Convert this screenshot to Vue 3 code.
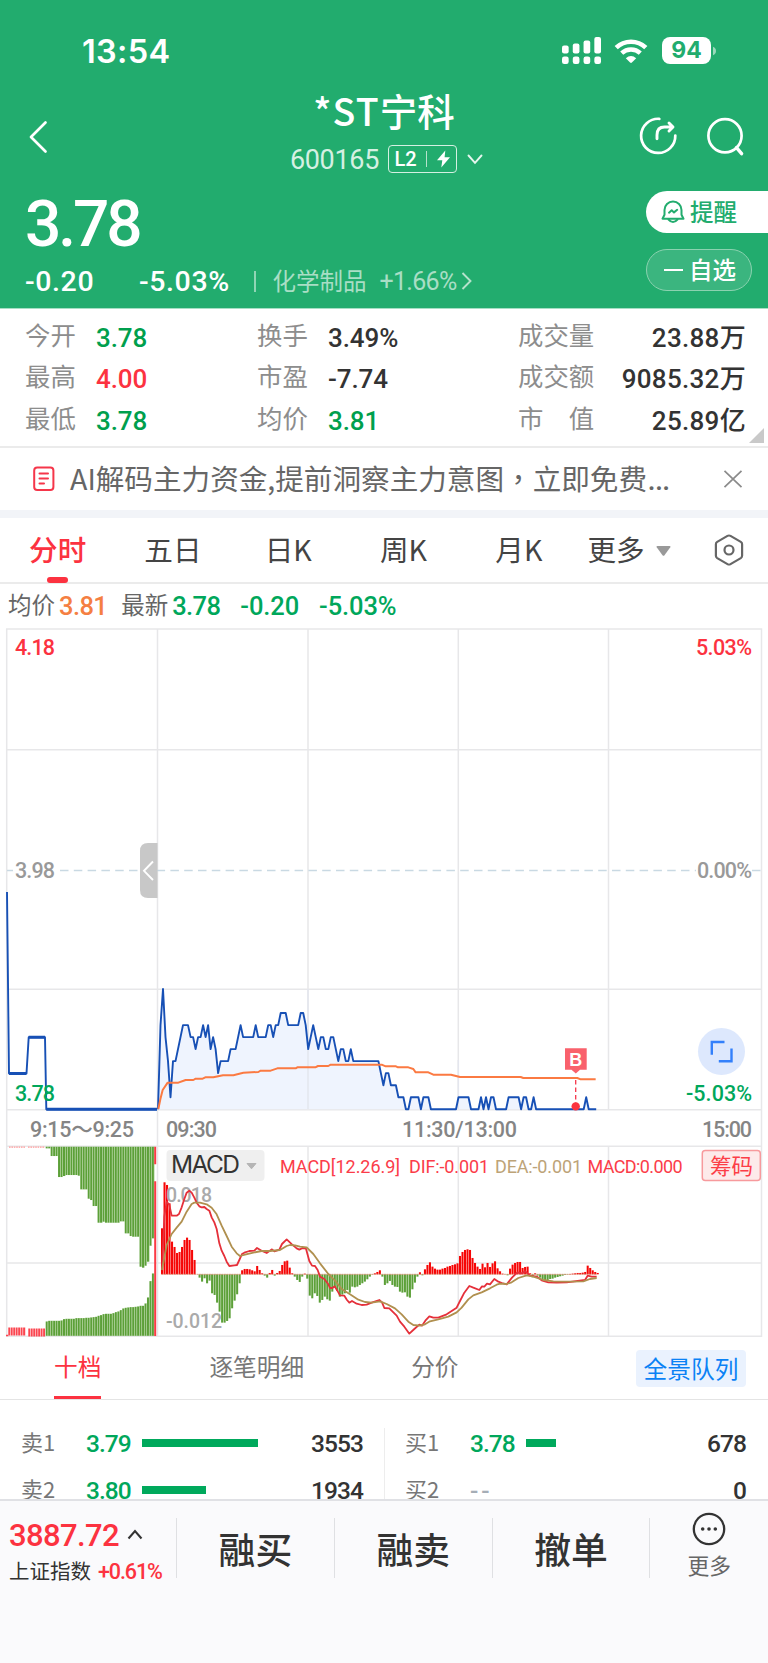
<template>
	<div class="page">
		<!-- 顶部 -->
		<header class="header">
			<div class="status-bar">
				<span class="clock">13:54</span>
				<div class="status-icons">
					<svg class="signal" width="39" height="27" viewBox="0 0 38 27" preserveAspectRatio="none" fill="#fff">
						<rect x="0" y="8.5" width="6.5" height="8" rx="2" />
						<rect x="10.5" y="6.5" width="6.5" height="10" rx="2" />
						<rect x="21" y="3.5" width="6.5" height="13" rx="2" />
						<rect x="31.5" y="0" width="6.5" height="16.5" rx="2" />
						<rect v-for="i in 4" :key="i" :x="(i - 1) * 10.5" y="19.5" width="6.5" height="7.5" rx="2.2" />
					</svg>
					<svg class="wifi" width="34" height="26" viewBox="0 0 34 26">
						<path d="M2.2 9.6A21.5 21.5 0 0 1 31.8 9.6" fill="none" stroke="#fff" stroke-width="4.6" />
						<path d="M7.7 15.2A13.6 13.6 0 0 1 26.3 15.2" fill="none" stroke="#fff" stroke-width="4.4" />
						<path d="M11.8 20.2Q17 16 22.2 20.2L17.9 24.5Q17 25.3 16.1 24.5Z" fill="#fff" />
					</svg>
					<div class="battery">94</div>
					<svg width="6" height="10" viewBox="0 0 6 10"><path d="M2 0.8Q5 2 5 5T2 9.2Z" fill="#9ad9bb" /></svg>
				</div>
			</div>

			<div class="nav">
				<svg class="back" width="20" height="34" viewBox="0 0 20 34">
					<path d="M17.5 2.5L3 17L17.5 31.5" fill="none" stroke="#fff" stroke-width="2.7" stroke-linecap="round" stroke-linejoin="round" />
				</svg>
				<div class="title">
					<h1><span>*ST</span>宁科</h1>
					<div class="code-row">
						<span class="code">600165</span>
						<span class="level">
							<span>L2</span>
							<i></i>
							<svg width="15" height="18" viewBox="0 0 15 18"><path d="M9.3 0.5L1 10.3H6.3L5.3 17.5L14 7.3H8.6Z" fill="#fff" /></svg>
						</span>
						<svg class="down" width="16" height="11" viewBox="0 0 16 11">
							<path d="M1.5 1.5L8 8.8L14.5 1.5" fill="none" stroke="#e6f6ee" stroke-width="1.9" stroke-linecap="round" />
						</svg>
					</div>
				</div>
				<div class="nav-icons">
					<svg width="40" height="42" viewBox="0 0 40 42" fill="none" stroke="#fff" stroke-width="2.7" stroke-linecap="round" stroke-linejoin="round">
						<path d="M21.3 3.8A17.1 17.1 0 1 0 37.3 20.5" />
						<path d="M19 23.8V20Q19 12 26.5 12H34M31 8L35 12L31 16" stroke-width="2.9" />
					</svg>
					<svg width="40" height="42" viewBox="0 0 40 42" fill="none" stroke="#fff" stroke-width="2.7" stroke-linecap="round">
						<circle cx="19" cy="20.8" r="16.6" />
						<path d="M30.5 32.6L35.6 38.6" stroke-width="3.4" />
					</svg>
				</div>
			</div>

			<div class="quote">
				<div class="quote-main">
					<div class="price num">3.78</div>
					<div class="change-row">
						<span class="change num">-0.20</span>
						<span class="percent num">-5.03%</span>
						<i></i>
						<span class="sector">化学制品</span>
						<span class="sector-rate num">+1.66%</span>
						<svg width="12" height="18" viewBox="0 0 12 18"><path d="M1.5 1L9.5 9L1.5 17" fill="none" stroke="#b5e2cc" stroke-width="1.9" /></svg>
					</div>
				</div>
				<div class="pills">
					<button class="pill pill-alert">
						<svg width="24" height="24" viewBox="0 0 24 24" fill="none" stroke="#22ac6e" stroke-width="2" stroke-linejoin="round" stroke-linecap="round">
							<path d="M1.5 18.7H22.5L20.5 14.8V10A8.5 8.5 0 0 0 3.5 10V14.8Z" />
							<path d="M7.5 19.5Q12 24.5 16.5 19.5" />
							<path d="M8 12.7L10.7 10.3L13 12.4L16.2 9.8" />
						</svg>
						<span>提醒</span>
					</button>
					<button class="pill pill-self">
						<i></i>
						<span>自选</span>
					</button>
				</div>
			</div>
		</header>

		<!-- 行情数据 -->
		<section class="stats">
			<div v-for="row in stats" :key="row[0].label" class="stat-row">
				<template v-for="item in row" :key="item.label">
					<span class="stat-label">{{ item.label }}</span>
					<span class="stat-value num" :class="item.tone">{{ item.value }}</span>
				</template>
			</div>
			<svg class="corner" width="15" height="15" viewBox="0 0 15 15"><path d="M15 0V15H0Z" fill="#c9c9c9" /></svg>
		</section>

		<!-- 公告 -->
		<section class="notice">
			<svg width="22" height="26" viewBox="0 0 22 26" fill="none" stroke="#f5364a" stroke-width="2" stroke-linecap="round">
				<rect x="1.2" y="1.4" width="19.2" height="22.6" rx="3" />
				<path d="M6.5 7.6H15M6.5 12.6H15M6.5 17.5H11" />
			</svg>
			<p>AI解码主力资金,提前洞察主力意图<span lang="zh-TW">，</span>立即免费<b>…</b></p>
			<svg width="20" height="20" viewBox="0 0 20 20"><path d="M1.5 1.8L18.5 18.2M18.5 1.8L1.5 18.2" stroke="#8b8b8b" stroke-width="1.7" /></svg>
		</section>

		<!-- 周期切换 -->
		<nav class="periods">
			<a v-for="p in periods" :key="p" :class="{ active: p === period }" @click="period = p">{{ p }}</a>
			<span class="more">更多</span>
			<svg class="tri" width="15" height="10" viewBox="0 0 15 10"><path d="M1.5 0H13.5Q15 0 14.3 1.3L8.5 9.2Q7.5 10.4 6.5 9.2L0.7 1.3Q0 0 1.5 0Z" fill="#999" /></svg>
			<svg class="setting" width="30" height="32" viewBox="0 0 30 32" fill="none" stroke="#666" stroke-width="2.2" stroke-linejoin="round">
				<path d="M13.5 1.9Q15 1.1 16.5 1.9L26.8 7.9Q28.1 8.7 28.1 10.2V21.8Q28.1 23.3 26.8 24.1L16.5 30.1Q15 30.9 13.5 30.1L3.2 24.1Q1.9 23.3 1.9 21.8V10.2Q1.9 8.7 3.2 7.9Z" />
				<circle cx="15" cy="16" r="4.5" />
			</svg>
		</nav>

		<div class="summary">
			<span class="avg-label">均价</span>
			<span class="num orange">3.81</span>
			<span class="new-label">最新</span>
			<span class="num">3.78</span>
			<span class="num diff">-0.20</span>
			<span class="num rate">-5.03%</span>
		</div>

		<!-- 分时图 + MACD -->
		<svg class="chart" width="768" height="714" viewBox="0 623 768 714">
			<g fill="none" stroke="#e7e7e9" stroke-width="1.5">
				<path d="M6.7 629H761.5V1336.3H6.7Z" />
				<path d="M7 749.8H761M7 989.2H761M7 1109.7H761M7 1146.3H761M7 1263H761" />
				<path d="M157.5 629V1336M308 629V1109M458.3 629V1109M608.5 629V1109M308 1146V1336M458.3 1146V1336M608.5 1146V1336" />
			</g>
			<path d="M7 870.5H13M60 870.5H696M752 870.5H761" stroke="#c9d9e3" stroke-width="1.5" stroke-dasharray="8.5 5.3" />

			<polygon :points="areaPoints" fill="#eff4fe" />
			<path d="M308 989V1109M458.3 1060V1109" stroke="#e4e6ee" stroke-width="1.5" />
			<polyline points="7,892 9,1073.4 26.5,1073.4 28.7,1037.2 45,1037.2 46.3,1109.2 157,1109.2" class="price-line" />
			<path d="M9 1073.4H26.5M28.7 1037.2H45M46.3 1109.2H157" class="price-bold" />
			<polyline :points="pricePoints" class="price-line" />
			<g transform="translate(0 840) scale(0.33333)">
				<polyline :points="avgLine" class="avg-line" />
			</g>

			<path d="M575.7 1080V1104" stroke="#f5364a" stroke-width="1.3" stroke-dasharray="4.5 3" />
			<circle cx="575.7" cy="1106.4" r="4.2" fill="#fb3440" />
			<path d="M565 1048.3H586.7V1069.8H580L575.8 1073.5L571.5 1069.8H565Z" fill="#f9616c" />
			<text x="575.8" y="1065.5" class="mark">B</text>

			<path d="M157.5 843H148Q140 843 140 851V890Q140 898 148 898H157.5Z" fill="#c8c8c8" />
			<path d="M153 861.5L144 870.8L153 880" fill="none" stroke="#fff" stroke-width="1.9" />

			<circle cx="721.5" cy="1051.5" r="23.5" fill="#dde8fd" />
			<path d="M724.5 1042H711.8V1054.8M718.8 1061.2H731.5V1048.5" fill="none" stroke="#3380fb" stroke-width="2.4" />

			<g class="axis">
				<text x="15" y="654.5" textLength="40" class="up">4.18</text>
				<text x="696" y="654.5" textLength="56" class="up">5.03%</text>
				<text x="15" y="878" textLength="40" class="mid">3.98</text>
				<text x="697" y="878" textLength="55" class="mid">0.00%</text>
				<text x="15" y="1101" textLength="40" class="down">3.78</text>
				<text x="686" y="1101" textLength="66" class="down">-5.03%</text>
				<text x="30" y="1137" textLength="104">9:15～9:25</text>
				<text x="166" y="1137" textLength="51">09:30</text>
				<text x="402" y="1137" textLength="115">11:30/13:00</text>
				<text x="702" y="1137" textLength="50">15:00</text>
			</g>

			<!-- 集合竞价柱 -->
			<path d="M9 1147.2H25.5M28 1147.2H45" stroke="#f99" stroke-width="1.3" stroke-dasharray="1.6 .8" />
			<g fill="#5ca038">
				<rect v-for="(h, i) in auctionTop" :key="'t' + i" :x="45.7 + i * 2.47" y="1146.7" width="2" :height="h / 3" />
				<rect v-for="(h, i) in auctionBottom" :key="'b' + i" :x="45.7 + i * 2.47" :y="1335.8 - h / 3" width="2" :height="h / 3" />
			</g>
			<g fill="#96c47c">
				<rect v-for="(h, i) in auctionTop" :key="'tg' + i" :x="47.7 + i * 2.47" y="1146.7" width="0.47" :height="h / 3" />
				<rect v-for="(h, i) in auctionBottom" :key="'bg' + i" :x="47.7 + i * 2.47" :y="1335.8 - h / 3" width="0.47" :height="h / 3" />
			</g>
			<path d="M155.2 1146.7V1164.3M155.2 1181.3V1336" stroke="#fb3a45" stroke-width="2" />
			<path d="M8.3 1331.5H25.8M28.3 1332.5H45.3" stroke="#fb4650" stroke-width="8" stroke-dasharray="1.9 .57" />
			<path d="M6 1335.5H8.3" stroke="#fb4650" stroke-width="1.5" />

			<!-- MACD -->
			<rect v-for="(h, i) in histogram" :key="'m' + i" :x="161 + i * 2.504" :y="h > 0 ? 1274.3 - h / 3 : 1274.3" width="2.05" :height="Math.abs(h) / 3" :fill="h > 0 ? '#f60606' : '#5ca038'" />
			<path d="M161.5 1274.3H597" stroke="#d98c70" stroke-width="0.8" stroke-dasharray="2 .5" />
			<g class="axis small">
				<text x="166" y="1202" textLength="46">0.018</text>
				<text x="166" y="1328" textLength="56">-0.012</text>
			</g>
			<g transform="translate(0 1130) scale(0.33333)">
				<polyline :points="difLine" class="dif-line" />
				<polyline :points="deaLine" class="dea-line" />
			</g>

			<rect x="166.5" y="1150" width="98" height="31" rx="4" fill="#efefef" />
			<text x="171" y="1173" textLength="69" class="macd-name">MACD</text>
			<path d="M247 1163.5H256L251.5 1168.8Z" fill="#b5b5b5" stroke="#b5b5b5" stroke-linejoin="round" />
			<g class="indicator">
				<text x="280" y="1172.5" textLength="120">MACD[12.26.9]</text>
				<text x="409" y="1172.5" textLength="80">DIF:-0.001</text>
				<text x="495" y="1172.5" textLength="87" class="dea">DEA:-0.001</text>
				<text x="587.5" y="1172.5" textLength="95">MACD:0.000</text>
			</g>
			<rect x="702.3" y="1150.5" width="58" height="30" rx="3" fill="#fdeaea" stroke="#f79a9d" stroke-width="1.5" />
			<text x="710" y="1174" class="chips">筹码</text>
		</svg>

		<!-- 盘口 -->
		<nav class="depth-tabs">
			<a class="active">十档</a>
			<a>逐笔明细</a>
			<a>分价</a>
			<button>全景队列</button>
		</nav>
		<section class="depth">
			<div v-for="(side, s) in depth" :key="s" class="depth-side">
				<div v-for="o in side" :key="o.name" class="depth-row">
					<span class="depth-name">{{ o.name }}</span>
					<span class="depth-price num" :class="{ none: !o.bar }">{{ o.price }}</span>
					<i :style="{ width: o.bar + 'px' }"></i>
					<span class="depth-vol num">{{ o.vol }}</span>
				</div>
			</div>
		</section>

		<!-- 底部操作栏 -->
		<footer class="footer">
			<div class="index">
				<div class="index-value">
					<span class="num">3887.72</span>
					<svg width="16" height="11" viewBox="0 0 16 11"><path d="M1.5 9.5L8 2L14.5 9.5" fill="none" stroke="#333" stroke-width="2.1" /></svg>
				</div>
				<div class="index-name">上证指数<span class="num">+0.61%</span></div>
			</div>
			<button v-for="a in actions" :key="a" class="action">{{ a }}</button>
			<div class="footer-more">
				<svg width="34" height="34" viewBox="0 0 34 34">
					<circle cx="17" cy="17" r="15.2" fill="none" stroke="#333" stroke-width="2.3" />
					<circle v-for="i in 3" :key="i" :cx="4.4 + i * 6.3" cy="17" r="1.8" fill="#333" />
				</svg>
				<span>更多</span>
			</div>
		</footer>
	</div>
</template>

<script setup>
	import {
		ref,
		computed
	} from 'vue'

	const period = ref('分时')
	const periods = ['分时', '五日', '日K', '周K', '月K']
	const actions = ['融买', '融卖', '撤单']

	const stats = [
		[
			{ label: '今开', value: '3.78', tone: 'green' },
			{ label: '换手', value: '3.49%' },
			{ label: '成交量', value: '23.88万' }
		],
		[
			{ label: '最高', value: '4.00', tone: 'red' },
			{ label: '市盈', value: '-7.74' },
			{ label: '成交额', value: '9085.32万' }
		],
		[
			{ label: '最低', value: '3.78', tone: 'green' },
			{ label: '均价', value: '3.81', tone: 'green' },
			{ label: '市　值', value: '25.89亿' }
		]
	]

	const depth = [
		[
			{ name: '卖1', price: '3.79', bar: 116, vol: 3553 },
			{ name: '卖2', price: '3.80', bar: 64, vol: 1934 }
		],
		[
			{ name: '买1', price: '3.78', bar: 30, vol: 678 },
			{ name: '买2', price: '--', bar: 0, vol: 0 }
		]
	]

	// [分钟, 高出跌停价的分数]
	const ticks = [
		[0, 0], [1, 7], [2, 10], [3, 6], [4, 4], [5, 1], [6, 4], [7, 4], [10, 7], [12, 7], [13, 6], [14, 6], [15, 5],
		[16, 6], [17, 6], [18, 7], [19, 6], [20, 7], [21, 5], [22, 6], [23, 5], [24, 3], [25, 4], [28, 4], [29, 5],
		[31, 5], [33, 7], [34, 6], [38, 6], [39, 7], [40, 6], [43, 6], [44, 7], [45, 7], [46, 6], [47, 7], [48, 7],
		[49, 8], [51, 8], [52, 7], [56, 7], [57, 8], [58, 8], [59, 7], [60, 5], [62, 7], [64, 5], [65, 6], [66, 6],
		[67, 5], [68, 5], [69, 6], [70, 6], [72, 4], [73, 5], [74, 5], [75, 4], [76, 4], [77, 5], [78, 4], [88, 4],
		[90, 2], [91, 3], [92, 3], [93, 2], [95, 2], [96, 1], [98, 1], [99, 0], [100, 0], [101, 1], [104, 1], [105, 0],
		[106, 1], [108, 1], [109, 0], [119, 0], [120, 1], [124, 1], [125, 0], [128, 0], [129, 1], [130, 0], [131, 1],
		[132, 0], [133, 1], [134, 1], [135, 0], [139, 0], [140, 1], [144, 1], [145, 0], [146, 1], [147, 1], [148, 0],
		[149, 0], [150, 1], [151, 0], [170, 0], [171, 1], [172, 0], [175, 0]
	]

	const toPoint = ([m, l]) => `${(158 + m * 2.504).toFixed(1)},${(1109.2 - l * 12.02).toFixed(1)}`
	const pricePoints = computed(() => ticks.map(toPoint).join(' '))
	const areaPoints = computed(() => `${pricePoints.value} 596,1109.2 158,1109.2`)

	const avgLine = '475,807 481,778 488,750 503,728 535,728 557,720 580,720 587,716 608,716 616,712 640,712 669,706 700,706 730,698 775,696 782,692 812,692 832,685 887,685 892,682 946,682 954,678 985,678 992,674 1145,674 1157,679 1188,679 1194,682 1225,682 1240,687 1247,697 1285,697 1300,704 1353,704 1380,711 1562,711 1570,714 1732,714 1742,718 1787,718'

	const auctionTop = [5, 5, 28, 28, 28, 91, 91, 88, 85, 85, 85, 85, 85, 87, 128, 128, 128, 156, 160, 178, 178, 228, 228, 225, 228, 228, 228, 228, 228, 228, 224, 224, 260, 260, 268, 270, 270, 270, 360, 363, 357, 345, 297, 275]
	const auctionBottom = [43, 45, 45, 45, 45, 45, 46, 50, 51, 51, 51, 51, 53, 53, 53, 53, 54, 54, 55, 56, 57, 60, 62, 65, 66, 66, 66, 68, 71, 73, 77, 82, 84, 85, 86, 86, 87, 88, 90, 90, 97, 115, 164, 187]

	const histogram = [
		138, 276, 268, 213, 98, 82, 64, 67, 82, 103, 110, 103, 73, 43, 0, -10, -22, -12, -27, -19, -57, -62, -85, -112,
		-145, -145, -140, -132, -102, -79, -60, -27, 12, 16, 16, 15, 12, 9, 25, 13, 3, -4, -10, 4, 13, -4, 4, 10, 28,
		39, 41, 20, 3, -7, -17, -23, -7, 2, -13, -64, -72, -57, -65, -85, -77, -67, -75, -79, -52, -40, -50, -67, -61,
		-57, -47, -55, -37, -39, -37, -32, -27, -22, -15, -7, -1, 3, 7, 12, -7, -32, -27, -20, -32, -37, -38, -52, -55,
		-54, -67, -70, -45, -25, -7, 6, -3, 15, 28, 36, 23, 17, 14, 14, 17, 19, 23, 25, 28, 30, 33, 55, 67, 73, 75, 73,
		49, 34, 23, 16, 32, 21, 34, 22, 33, 39, 18, 9, 2, 0, -3, 17, 29, 34, 37, 37, 19, 22, 23, 3, -9, 3, -4, -10,
		-14, -17, -17, -14, -13, -10, -8, -6, -4, -2, -1, 1, 2, 3, 4, 4, 5, 7, 26, 19, 12, 7, 4
	]

	const difLine = '486,420 493,260 500,215 508,225 515,257 530,257 537,252 545,232 553,207 560,188 568,182 575,188 583,203 590,218 598,229 605,232 613,231 620,237 628,242 635,262 643,277 650,297 658,340 665,362 673,378 680,395 688,408 703,406 711,405 718,390 726,372 733,368 748,363 763,362 771,354 786,363 800,369 816,358 823,364 838,359 846,342 860,328 876,343 890,355 898,359 908,354 918,356 928,393 936,407 945,408 953,420 960,440 973,447 985,463 990,474 997,474 1004,469 1012,482 1020,496 1033,497 1041,510 1048,518 1056,513 1070,521 1085,525 1100,524 1115,518 1138,510 1146,517 1153,534 1168,535 1190,557 1200,575 1213,590 1228,611 1243,597 1258,584 1266,587 1276,572 1288,559 1300,563 1315,563 1340,553 1370,533 1380,513 1393,488 1408,468 1420,473 1438,480 1446,469 1453,470 1461,461 1470,463 1483,447 1495,455 1506,459 1520,463 1536,443 1552,427 1564,430 1576,424 1590,437 1611,440 1625,451 1645,457 1670,458 1700,457 1755,450 1763,437 1775,440 1790,440'
	const deaLine = '486,420 500,345 515,312 530,293 545,275 560,245 575,222 583,218 600,218 620,223 635,233 650,253 665,287 680,318 695,350 710,370 720,378 735,374 760,368 785,363 810,363 840,360 860,348 870,345 885,346 900,350 920,352 940,372 960,400 985,432 1005,452 1025,477 1050,493 1075,509 1095,516 1115,518 1140,514 1160,522 1185,535 1205,553 1225,575 1240,585 1260,587 1275,583 1290,574 1315,568 1345,560 1370,547 1385,533 1405,508 1420,496 1445,487 1470,475 1490,464 1500,461 1520,462 1535,457 1555,444 1580,436 1600,440 1630,450 1660,454 1700,455 1750,454 1770,447 1790,444'
</script>

<style>
	body {
		margin: 0;
		background: #fafafc;
	}
</style>

<style scoped>
	.page {
		width: 768px;
		height: 1663px;
		overflow: hidden;
		background: #fff;
		display: flex;
		flex-direction: column;
		font-family: "Noto Sans CJK SC", sans-serif;
		color: #333;
	}

	.page > * {
		flex: none;
		box-sizing: border-box;
	}

	svg {
		display: block;
		flex: none;
	}

	h1,
	p {
		margin: 0;
		font-weight: 400;
	}

	button {
		font: inherit;
		color: inherit;
		background: none;
		border: none;
		padding: 0;
	}

	.num {
		font-family: Roboto, "Noto Sans CJK SC", sans-serif;
		font-weight: 500;
	}

	.green {
		color: #009f4d;
	}

	.red {
		color: #fc3240;
	}

	/* 顶部 */
	.header {
		height: 309px;
		background: #22ac6e;
		border-bottom: 1px solid #a6dfc4;
		color: #fff;
	}

	.status-bar {
		height: 64px;
		padding: 37px 51px 0 82px;
		box-sizing: border-box;
		display: flex;
		justify-content: space-between;
	}

	.clock {
		font: 600 32.5px/30px Inter, sans-serif;
		letter-spacing: 0.3px;
	}

	.status-icons {
		display: flex;
		align-items: center;
	}

	.wifi {
		margin-left: 13px;
	}

	.battery {
		width: 49px;
		height: 27px;
		margin-left: 14px;
		border-radius: 8px;
		background: #fff;
		color: #22ac6e;
		font: 700 23px/27px Inter, sans-serif;
		text-align: center;
	}

	.nav {
		height: 124px;
		padding: 0 23px 0 28px;
		display: flex;
		align-items: flex-start;
	}

	.back {
		margin-top: 56px;
	}

	.title {
		flex: 1;
		padding: 20px 0 0 0;
		display: flex;
		flex-direction: column;
		align-items: center;
	}

	.title h1 {
		font-size: 37.5px;
		line-height: 52px;
		font-weight: 500;
		margin-left: 82px;
	}

	.title h1 span {
		letter-spacing: 1.2px;
	}

	.code-row {
		display: flex;
		align-items: center;
		margin: 8px 0 0 87px;
	}

	.code {
		font: 400 27px/28px Roboto, sans-serif;
		letter-spacing: -0.3px;
		color: #d5f0e2;
		padding-top: 2px;
	}

	.level {
		width: 67px;
		height: 26px;
		margin-left: 9px;
		border: 1.5px solid #d5f0e2;
		border-radius: 4px;
		display: flex;
		align-items: center;
		justify-content: center;
		font: 500 20px/26px Roboto, sans-serif;
	}

	.level i {
		width: 1px;
		height: 16px;
		margin: 0 9px;
		background: #b5e2cc;
	}

	.down {
		margin-left: 10px;
	}

	.nav-icons {
		display: flex;
		gap: 28px;
		margin-top: 51px;
	}

	.nav-icons svg:last-child {
		margin-right: -1px;
	}

	.quote {
		display: flex;
		justify-content: space-between;
		padding-left: 25px;
	}

	.price {
		font-size: 64px;
		line-height: 64px;
		font-weight: 500;
		letter-spacing: -3.1px;
		margin-top: 5px;
	}

	.change-row {
		display: flex;
		align-items: center;
		margin-top: 9px;
		height: 30px;
	}

	.change,
	.percent {
		font-size: 28.5px;
		letter-spacing: 0.6px;
		padding-top: 1px;
	}

	.change {
		width: 114px;
	}

	.percent {
		width: 115px;
	}

	.change-row i {
		width: 1.5px;
		height: 21px;
		background: #90d5b5;
	}

	.sector {
		margin: -3px 0 0 17px;
		width: 107px;
		font-size: 23.5px;
		color: #a9dec5;
	}

	.sector-rate {
		width: 81px;
		font-size: 25px;
		font-weight: 400;
		letter-spacing: -0.7px;
		color: #a9dec5;
	}

	.pills {
		width: 122px;
		padding-top: 3px;
	}

	.pill {
		display: flex;
		align-items: center;
		box-sizing: border-box;
		height: 42px;
		font-size: 23.5px;
		line-height: 38px;
		font-weight: 500;
	}

	.pill span {
		margin-top: -2px;
	}

	.pill-alert {
		width: 122px;
		padding-left: 15px;
		gap: 5px;
		border-radius: 21px 0 0 21px;
		background: #fff;
		color: #22ac6e;
	}

	.pill-self {
		width: 106px;
		margin-top: 16px;
		padding-left: 17px;
		gap: 6px;
		border: 1.5px solid #8bd2b0;
		border-radius: 21px;
		background: #3bb57f;
	}

	.pill-self i {
		width: 19px;
		height: 2px;
		background: #fff;
	}

	/* 行情数据 */
	.stats {
		position: relative;
		height: 139px;
		padding: 7px 22px 0 25px;
		border-bottom: 2px solid #ebebeb;
	}

	.stat-row {
		display: grid;
		grid-template-columns: 71px 161px 71px 190px 90px 1fr;
		height: 41.4px;
		line-height: 41.4px;
		font-size: 25.4px;
	}

	.stat-label {
		color: #8d8d8d;
		white-space: nowrap;
		margin-top: -2px;
	}

	.stat-value {
		font-size: 26px;
		letter-spacing: -0.1px;
		margin-top: 2px;
		white-space: nowrap;
	}

	.stat-value:last-child {
		text-align: right;
		letter-spacing: 0.3px;
	}

	.corner {
		position: absolute;
		right: 4px;
		bottom: 3px;
	}

	/* 公告 */
	.notice {
		height: 70px;
		padding: 0 25px 0 33px;
		border-bottom: 8px solid #f2f4f8;
		display: flex;
		align-items: center;
	}

	.notice p {
		flex: 1;
		margin: -2px 0 0 15px;
		font-size: 28.6px;
		line-height: 40px;
		color: #666;
		white-space: nowrap;
	}

	.notice span {
		font-family: "Noto Sans CJK TC", sans-serif;
	}

	.notice b {
		font-family: Roboto, sans-serif;
		font-weight: 400;
		font-size: 35px;
		line-height: 1;
	}

	/* 周期切换 */
	.periods {
		height: 66px;
		border-bottom: 2px solid #ebebeb;
		display: flex;
		align-items: center;
		font-size: 28.6px;
		line-height: 62px;
		color: #444;
	}

	.periods a {
		width: 115.3px;
		height: 65px;
		text-align: center;
	}

	.periods .active {
		color: #fc3240;
		font-weight: 500;
	}

	.periods .active::after {
		content: "";
		display: block;
		width: 21px;
		height: 6px;
		margin: -3px auto 0;
		border-radius: 3px;
		background: #fc3240;
	}

	.more {
		margin: -3px 0 0 11px;
	}

	.tri {
		margin-left: 11px;
		margin-top: 2px;
	}

	.setting {
		margin-left: 43px;
	}

	.summary {
		height: 39px;
		padding-left: 8px;
		display: flex;
		align-items: center;
		font-size: 23.5px;
		color: #666;
	}

	.summary .num {
		font-size: 25.5px;
		letter-spacing: -0.6px;
		margin: 4px 0 0 4px;
		color: #00a75b;
	}

	.summary .orange {
		color: #f57f42;
	}

	.new-label {
		margin-left: 14px;
	}

	.summary .diff,
	.summary .rate {
		margin-left: 20px;
		letter-spacing: -0.1px;
	}

	/* 图表 */
	.price-line {
		fill: none;
		stroke: #1750b5;
		stroke-width: 1.9;
		stroke-linejoin: round;
	}

	.price-bold {
		stroke: #1750b5;
		stroke-width: 3;
	}

	.avg-line {
		fill: none;
		stroke: #fb7a42;
		stroke-width: 6;
		stroke-linejoin: round;
	}

	.dif-line,
	.dea-line {
		fill: none;
		stroke: #e5303a;
		stroke-width: 5.4;
		stroke-linejoin: round;
	}

	.dea-line {
		stroke: #b0904f;
	}

	.mark {
		font: 700 18px "Liberation Sans", sans-serif;
		fill: #fff;
		text-anchor: middle;
	}

	.axis text {
		font: 500 21.5px Roboto, "Noto Sans CJK SC", sans-serif;
		fill: #858585;
	}

	.axis .up {
		fill: #fc3240;
	}

	.axis .mid {
		fill: #999;
	}

	.axis .down {
		fill: #00a75b;
	}

	.small text {
		font-size: 19.5px;
		fill: #aaa;
	}

	.macd-name {
		font: 400 24.5px Inter, sans-serif;
		fill: #333;
	}

	.indicator text {
		font: 400 18px Roboto, sans-serif;
		fill: #fb3c49;
	}

	.indicator .dea {
		fill: #bda377;
	}

	.chips {
		font-size: 21.5px;
		fill: #fc3e47;
	}

	/* 盘口 */
	.depth-tabs {
		height: 63px;
		padding: 0 22px 0 54px;
		border-bottom: 1px solid #e4e4e4;
		display: flex;
		font-size: 23.7px;
		line-height: 59px;
		color: #777;
	}

	.depth-tabs a {
		height: 62px;
	}

	.depth-tabs a:nth-child(2) {
		margin-left: 108px;
	}

	.depth-tabs a:nth-child(3) {
		margin-left: 107px;
	}

	.depth-tabs .active {
		color: #fc3240;
		box-shadow: inset 0 -3px #fc3240;
	}

	.depth-tabs button {
		width: 110px;
		height: 37px;
		margin: 13px 0 0 auto;
		border-radius: 4px;
		background: #eaf2fe;
		color: #0a82f5;
		line-height: 35px;
	}

	.depth {
		height: 99px;
		padding-top: 20px;
		overflow: hidden;
		display: flex;
	}

	.depth-side {
		width: 385px;
		height: 90px;
		box-sizing: border-box;
		padding: 0 22px 0 21px;
		margin-top: 8px;
	}

	.depth-side:first-child {
		border-right: 1px solid #ededed;
		padding-right: 21px;
	}

	.depth-side:last-child {
		width: 383px;
		padding-left: 20px;
	}

	.depth-row {
		display: flex;
		align-items: center;
		height: 47px;
		position: relative;
		top: -8px;
	}

	.depth-name {
		width: 65px;
		margin-top: -5px;
		font-size: 22px;
		color: #777;
	}

	.depth-price {
		width: 56px;
		font-size: 24.5px;
		letter-spacing: -1px;
		color: #00a75b;
	}

	.depth-price.none {
		color: #a5adb6;
		letter-spacing: 3px;
	}

	.depth-row i {
		height: 8px;
		margin-top: -2px;
		background: #00a95c;
	}

	.depth-vol {
		margin-left: auto;
		font-size: 24.5px;
		letter-spacing: -0.9px;
	}

	/* 底部操作栏 */
	.footer {
		height: 165px;
		border-top: 2px solid #e0e1e5;
		background: #fafafc;
		display: flex;
		align-items: flex-start;
	}

	.index {
		width: 176px;
		padding: 16px 0 0 9px;
		box-sizing: border-box;
	}

	.index-value {
		display: flex;
		align-items: center;
		gap: 8px;
		height: 37px;
		font-size: 31px;
		letter-spacing: -0.6px;
		color: #fc3240;
	}

	.index-value svg {
		margin-top: -3px;
	}

	.index-name {
		font-size: 20.5px;
		line-height: 32px;
		white-space: nowrap;
		color: #333;
	}

	.index-name .num {
		margin-left: 7px;
		font-size: 21.5px;
		letter-spacing: -1.1px;
		color: #fc3240;
	}

	.action {
		width: 157.8px;
		height: 60px;
		margin-top: 17px;
		border-left: 1.5px solid #dfe0e3;
		font-size: 36.8px;
		line-height: 57px;
		font-weight: 500;
		text-align: center;
	}

	.footer-more {
		flex: 1;
		height: 60px;
		margin-top: 17px;
		border-left: 1.5px solid #dfe0e3;
		display: flex;
		flex-direction: column;
		align-items: center;
		font-size: 21.8px;
		line-height: 24px;
		color: #666;
	}

	.footer-more svg {
		margin: -6px 0 7px;
	}
</style>
